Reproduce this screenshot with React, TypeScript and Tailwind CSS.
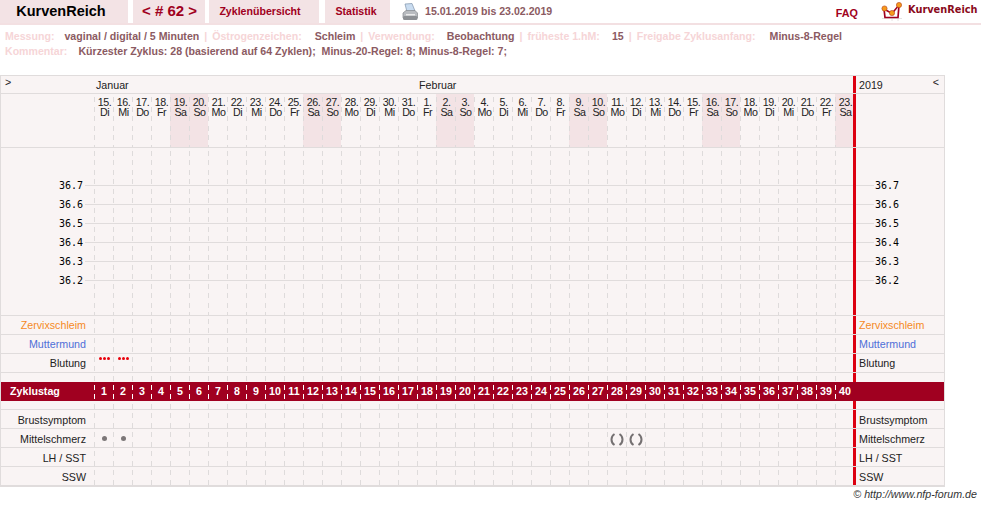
const days = [
  ['15.', 'Di'], ['16.', 'Mi'], ['17.', 'Do'], ['18.', 'Fr'], ['19.', 'Sa'], ['20.', 'So'], ['21.', 'Mo'], ['22.', 'Di'],
  ['23.', 'Mi'], ['24.', 'Do'], ['25.', 'Fr'], ['26.', 'Sa'], ['27.', 'So'], ['28.', 'Mo'], ['29.', 'Di'], ['30.', 'Mi'],
  ['31.', 'Do'], ['1.', 'Fr'], ['2.', 'Sa'], ['3.', 'So'], ['4.', 'Mo'], ['5.', 'Di'], ['6.', 'Mi'], ['7.', 'Do'],
  ['8.', 'Fr'], ['9.', 'Sa'], ['10.', 'So'], ['11.', 'Mo'], ['12.', 'Di'], ['13.', 'Mi'], ['14.', 'Do'], ['15.', 'Fr'],
  ['16.', 'Sa'], ['17.', 'So'], ['18.', 'Mo'], ['19.', 'Di'], ['20.', 'Mi'], ['21.', 'Do'], ['22.', 'Fr'], ['23.', 'Sa'],
];

const temps = ['36.7', '36.6', '36.5', '36.4', '36.3', '36.2'];

// the dashed column line, repeated in every row of the table
const dashed =
  'bg-[repeating-linear-gradient(to_bottom,transparent_0,transparent_3px,#dedbdb_3px,#dedbdb_8px,transparent_8px,transparent_9.5px)] bg-[length:1px_100%] bg-no-repeat';
const dashedWhite =
  'bg-[repeating-linear-gradient(to_bottom,transparent_0,transparent_3px,#ffffff_3px,#ffffff_8px,transparent_8px,transparent_9.5px)] bg-[length:1px_100%] bg-no-repeat';

function Logo() {
  return (
    <svg width="22" height="20" viewBox="0 0 22 20" className="shrink-0">
      <path d="M1 16.5 H21 M11 16 V19 M17 16 V19" stroke="#e6e2e2" strokeWidth="1" fill="none" />
      <path d="M3 7 L4 15.5 L17 15.5 L18 3" fill="none" stroke="#a00020" strokeWidth="1.7" />
      <path d="M3 7 L11 11.5 L18 3" fill="none" stroke="#a00020" strokeWidth="1.5" />
      <circle cx="3.5" cy="6.5" r="2.6" fill="#f59a1c" stroke="#b5401a" strokeWidth="0.6" />
      <circle cx="11" cy="11" r="2.6" fill="#f59a1c" stroke="#b5401a" strokeWidth="0.6" />
      <circle cx="18" cy="3" r="2.6" fill="#f59a1c" stroke="#b5401a" strokeWidth="0.6" />
    </svg>
  );
}

function Printer() {
  return (
    <svg width="16" height="18" viewBox="0 0 16 18" className="shrink-0">
      <path d="M3 1 L10 0.5 L13 8 L5 9 Z" fill="#c9dcf0" stroke="#7f93aa" strokeWidth="0.7" />
      <path d="M1 10 L4 7.5 L13 7.5 L15.5 10 L15.5 15 L1 15 Z" fill="#b9bcc0" stroke="#85888c" strokeWidth="0.7" />
      <rect x="1" y="13" width="14.5" height="4" rx="1.5" fill="#8d9094" />
      <rect x="4" y="11" width="9" height="1.4" fill="#ececec" />
    </svg>
  );
}

function Tab({ className, children }: { className: string; children: React.ReactNode }) {
  return <div className={`flex items-center justify-center bg-[#f3e3e5] ${className}`}>{children}</div>;
}

function Sep() {
  return <span className="mx-[5px] text-[#f6d5d7]">|</span>;
}

function Cols({ cells, dark }: { cells?: Record<number, React.ReactNode>; dark?: boolean }) {
  return (
    <div className="flex w-[759px] shrink-0 self-stretch overflow-hidden">
      {days.map((_, i) => (
        <div key={i} className={`flex w-[19px] shrink-0 justify-center ${dark ? dashedWhite : dashed}`}>
          {cells?.[i]}
        </div>
      ))}
    </div>
  );
}

function Row({
  label,
  color = 'text-[#222]',
  low,
  cells,
}: {
  label: string;
  color?: string;
  low?: boolean;
  cells?: Record<number, React.ReactNode>;
}) {
  return (
    <div className={`flex h-[19px] border-b border-[#e0dcdc] text-[10.7px] ${low ? 'leading-[20px]' : 'leading-[18px]'}`}>
      <div className={`w-[93px] shrink-0 pr-[8px] text-right ${color}`}>{label}</div>
      <Cols cells={cells} />
      <div className={`flex-1 border-l-[3px] border-[#dc0010] pl-[3px] ${color}`}>{label}</div>
    </div>
  );
}

function Spacer({ h, line }: { h: string; line?: boolean }) {
  return (
    <div className={`flex ${h} ${line ? 'border-b border-[#e0dcdc]' : ''}`}>
      <div className="w-[93px] shrink-0" />
      <Cols />
      <div className="flex-1 border-l-[3px] border-[#dc0010]" />
    </div>
  );
}

function Bleeding() {
  return (
    <div className="mt-[3px] ml-[1px] flex h-[3px] gap-[1px]">
      <div className="h-[3px] w-[3px] rounded-full bg-[#e8000b]" />
      <div className="h-[3px] w-[3px] rounded-full bg-[#e8000b]" />
      <div className="h-[3px] w-[3px] rounded-full bg-[#e8000b]" />
    </div>
  );
}

function Dot() {
  return <div className="mt-[7px] ml-[1px] h-[5px] w-[5px] rounded-full bg-[#7c7778]" />;
}

function Brackets() {
  return (
    <svg width="14" height="13" viewBox="0 0 14 13" className="mt-[4px] ml-[1px] shrink-0">
      <path d="M4.5 1 C0.5 3.5 0.5 9.5 4.5 12" fill="none" stroke="#757172" strokeWidth="2" />
      <path d="M9.5 1 C13.5 3.5 13.5 9.5 9.5 12" fill="none" stroke="#757172" strokeWidth="2" />
    </svg>
  );
}

export default function App() {
  return (
    <div className="h-[506px] w-[981px] overflow-hidden bg-white font-['Liberation_Sans',Arial,sans-serif] text-[#222]">
      {/* top tabs */}
      <div className="flex h-[25px] items-stretch border-b-2 border-[#f3e0e2]">
        <Tab className="w-[128px] pr-[6px] text-[14.5px] font-bold text-black">KurvenReich</Tab>
        <Tab className="ml-[5px] w-[72px] pl-[1px] text-[15px] font-bold text-[#a00020]">{'< # 62 >'}</Tab>
        <Tab className="ml-[4px] w-[110px] pr-[8px] text-[10.6px] font-bold text-[#a00020]">Zyklenübersicht</Tab>
        <Tab className="ml-[6px] w-[65px] pr-[3px] text-[10.6px] font-bold text-[#a00020]">Statistik</Tab>
        <div className="ml-[12px] flex items-center">
          <Printer />
          <span className="ml-[7px] text-[10.6px] font-bold text-[#8b5a62]">15.01.2019 bis 23.02.2019</span>
        </div>
        <div className="ml-auto flex items-center">
          <span className="mt-[4px] text-[10.8px] font-bold text-[#a00020]">FAQ</span>
          <div className="ml-[23px] flex items-center">
            <Logo />
            <span className="mb-[3px] ml-[5px] w-[73px] whitespace-nowrap font-['DejaVu_Sans',sans-serif] text-[9.8px] font-bold text-[#8a0a1c]">
              KurvenReich
            </span>
          </div>
        </div>
      </div>

      {/* info lines */}
      <div className="pl-[5px] pt-[4px] text-[10.6px] font-bold leading-[15px] text-[#8b5a62]">
        <div className="flex whitespace-pre">
          <span className="text-[#f6d5d7]">Messung:</span>
          <span className="ml-[10px]">vaginal / digital / 5 Minuten</span>
          <Sep />
          <span className="text-[#f6d5d7]">Östrogenzeichen:</span>
          <span className="ml-[13px]">Schleim</span>
          <Sep />
          <span className="text-[#f6d5d7]">Verwendung:</span>
          <span className="ml-[12px]">Beobachtung</span>
          <Sep />
          <span className="text-[#f6d5d7]">früheste 1.hM:</span>
          <span className="ml-[12px]">15</span>
          <Sep />
          <span className="text-[#f6d5d7]">Freigabe Zyklusanfang:</span>
          <span className="ml-[14px]">Minus-8-Regel</span>
        </div>
        <div className="flex whitespace-pre">
          <span className="text-[#f6d5d7]">Kommentar:</span>
          <span className="ml-[11px]">Kürzester Zyklus: 28 (basierend auf 64 Zyklen);  Minus-20-Regel: 8; Minus-8-Regel: 7;</span>
        </div>
      </div>

      {/* chart table */}
      <div className="mt-[16px] w-[945px] border border-[#e0dcdc] bg-[#f9f4f4]">
        {/* months */}
        <div className="flex h-[18px] border-b border-[#e0dcdc] text-[10.7px] leading-[18px]">
          <div className="w-[93px] shrink-0 pl-[4px] leading-[13px]">&gt;</div>
          <div className="flex w-[759px] shrink-0 pl-[2px]">
            <span className="w-[323px]">Januar</span>
            <span>Februar</span>
          </div>
          <div className="flex flex-1 justify-between border-l-[3px] border-[#dc0010] pl-[3px] pr-[5px]">
            <span>2019</span>
            <span className="leading-[13px]">&lt;</span>
          </div>
        </div>

        {/* dates */}
        <div className="flex h-[54px] border-b border-[#e0dcdc]">
          <div className="w-[93px] shrink-0" />
          <div className="flex w-[759px] shrink-0 overflow-hidden">
            {days.map(([d, w], i) => (
              <div
                key={i}
                className={`w-[19px] shrink-0 pl-[2px] pt-[3px] text-center text-[10.7px] leading-[10px] tracking-[-0.5px] ${dashed} ${
                  w === 'Sa' || w === 'So' ? 'bg-[#f3e3e5]' : ''
                }`}
              >
                <div>{d}</div>
                <div>{w}</div>
              </div>
            ))}
          </div>
          <div className="flex-1 border-l-[3px] border-[#dc0010]" />
        </div>

        {/* temperature area */}
        <div className="flex h-[168px] border-b border-[#e0dcdc] font-['DejaVu_Sans_Mono',monospace] text-[10px] leading-[19px] text-black">
          <div className="w-[93px] shrink-0 pt-[28px]">
            {temps.map((t) => (
              <div key={t} className="flex h-[19px] items-center justify-end">
                <span>{t}</span>
                <div className="ml-[2px] h-px w-[9px] bg-[#e0dcdc]" />
              </div>
            ))}
          </div>
          <div className="relative w-[759px] shrink-0 pt-[28px]">
            <div className="absolute inset-0 flex">
              <Cols />
            </div>
            {temps.map((t) => (
              <div key={t} className="flex h-[19px] items-center">
                <div className="h-px w-full bg-[#e0dcdc]" />
              </div>
            ))}
          </div>
          <div className="flex-1 border-l-[3px] border-[#dc0010] pt-[28px]">
            {temps.map((t) => (
              <div key={t} className="flex h-[19px] items-center">
                <div className="mr-[1px] h-px w-[18px] bg-[#e0dcdc]" />
                <span>{t}</span>
              </div>
            ))}
          </div>
        </div>

        <Row label="Zervixschleim" color="text-[#f58a1f]" />
        <Row label="Muttermund" color="text-[#4f6fd8]" />
        <Row label="Blutung" cells={{ 0: <Bleeding />, 1: <Bleeding /> }} />
        <Spacer h="h-[9px]" />

        {/* cycle days */}
        <div className="flex h-[19px] bg-[#a00020] text-[10.7px] font-bold leading-[19px] text-white">
          <div className="w-[93px] shrink-0 pl-[9px]">Zyklustag</div>
          <div className="flex w-[759px] shrink-0">
            {days.map((_, i) => (
              <div key={i} className={`w-[19px] shrink-0 pl-[1px] text-center ${dashedWhite}`}>
                {i + 1}
              </div>
            ))}
          </div>
        </div>

        <Spacer h="h-[9px]" line />
        <Row label="Brustsymptom" low />
        <Row
          label="Mittelschmerz"
          low
          cells={{ 0: <Dot />, 1: <Dot />, 27: <Brackets />, 28: <Brackets /> }}
        />
        <Row label="LH / SST" low />
        <Row label="SSW" low />
      </div>

      <div className="mt-[1px] w-[977px] text-right text-[10.7px] italic leading-[13px] text-[#333]">
        © http://www.nfp-forum.de
      </div>
    </div>
  );
}
